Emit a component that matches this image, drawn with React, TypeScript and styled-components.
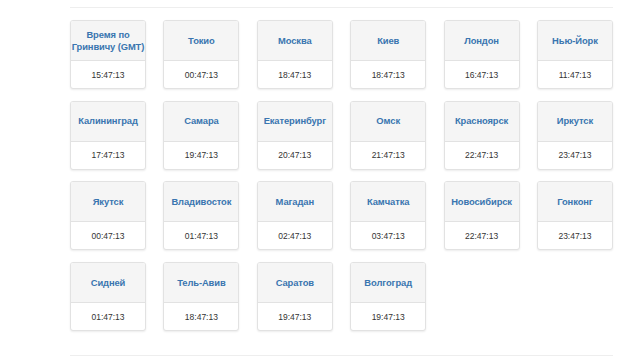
import * as React from 'react';
import styled, { createGlobalStyle } from 'styled-components';

const GlobalStyle = createGlobalStyle`
  html, body {
    margin: 0;
    padding: 0;
    background: #ffffff;
  }
  body {
    font-family: "Liberation Sans", Arial, sans-serif;
  }
`;

const Page = styled.div`
  box-sizing: border-box;
  width: 640px;
  height: 360px;
  padding: 7px 0 0 70px;
  overflow: hidden;
`;

const Rule = styled.div`
  width: 543px;
  height: 1px;
  background: #eeeeee;
`;

const Grid = styled.div`
  display: grid;
  grid-template-columns: repeat(6, 76px);
  column-gap: 17.4px;
  row-gap: 11.7px;
  margin: 12px 0 24px 0;
`;

const Card = styled.div`
  box-sizing: border-box;
  height: 69px;
  display: flex;
  flex-direction: column;
  background: #ffffff;
  border: 1px solid #e2e2e2;
  border-radius: 3px;
  box-shadow: 0 1px 2px rgba(0, 0, 0, 0.08);
  overflow: hidden;
`;

const CardHead = styled.div`
  box-sizing: border-box;
  height: 40px;
  display: flex;
  align-items: center;
  justify-content: center;
  background: #f5f5f5;
  border-bottom: 1px solid #e2e2e2;
  text-align: center;
`;

const City = styled.span`
  white-space: pre;
  font-size: 9.4px;
  font-weight: bold;
  letter-spacing: -0.1px;
  line-height: 12px;
  color: #3a75b0;
`;

const CardBody = styled.div`
  flex: 1;
  display: flex;
  align-items: center;
  justify-content: center;
  font-size: 8.5px;
  color: #333333;
`;

interface Zone {
  city: string;
  time: string;
}

const zones: Zone[] = [
  { city: 'Время по\nГринвичу (GMT)', time: '15:47:13' },
  { city: 'Токио', time: '00:47:13' },
  { city: 'Москва', time: '18:47:13' },
  { city: 'Киев', time: '18:47:13' },
  { city: 'Лондон', time: '16:47:13' },
  { city: 'Нью-Йорк', time: '11:47:13' },
  { city: 'Калининград', time: '17:47:13' },
  { city: 'Самара', time: '19:47:13' },
  { city: 'Екатеринбург', time: '20:47:13' },
  { city: 'Омск', time: '21:47:13' },
  { city: 'Красноярск', time: '22:47:13' },
  { city: 'Иркутск', time: '23:47:13' },
  { city: 'Якутск', time: '00:47:13' },
  { city: 'Владивосток', time: '01:47:13' },
  { city: 'Магадан', time: '02:47:13' },
  { city: 'Камчатка', time: '03:47:13' },
  { city: 'Новосибирск', time: '22:47:13' },
  { city: 'Гонконг', time: '23:47:13' },
  { city: 'Сидней', time: '01:47:13' },
  { city: 'Тель-Авив', time: '18:47:13' },
  { city: 'Саратов', time: '19:47:13' },
  { city: 'Волгоград', time: '19:47:13' }
];

export default function App() {
  return (
    <>
      <GlobalStyle />
      <Page>
        <Rule />
        <Grid>
          {zones.map(z => (
            <Card key={z.city}>
              <CardHead>
                <City>{z.city}</City>
              </CardHead>
              <CardBody>{z.time}</CardBody>
            </Card>
          ))}
        </Grid>
        <Rule />
      </Page>
    </>
  );
}
